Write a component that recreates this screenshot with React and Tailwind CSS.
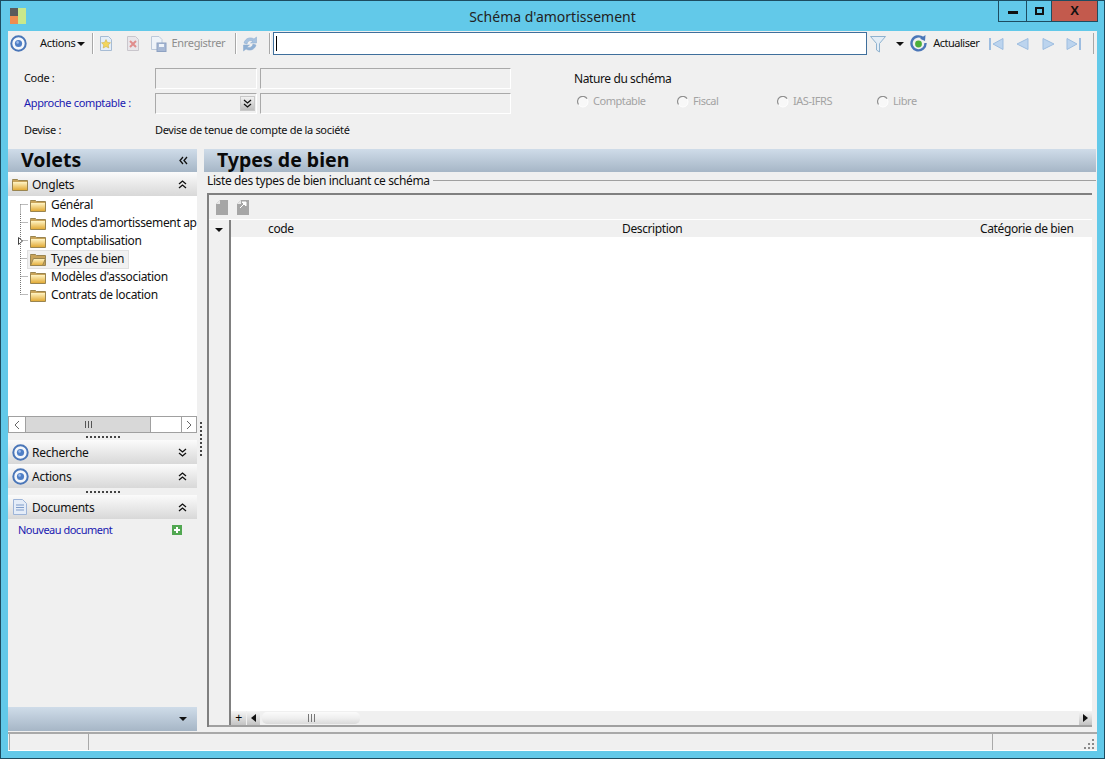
const Target = ({ className = "" }) => (
  <svg viewBox="0 0 17 17" className={`w-[17px] h-[17px] shrink-0 ${className}`}>
    <circle cx="8.5" cy="8.5" r="7.2" fill="#f4f7fb" stroke="#4a76b8" strokeWidth="2" />
    <circle cx="8.5" cy="8.5" r="3.6" fill="#4f7fc6" />
    <circle cx="7.6" cy="7.4" r="1.3" fill="#9dbcec" />
  </svg>
);

const Folder = ({ open = false, className = "" }) => (
  <svg viewBox="0 0 16 13" className={`w-[16px] h-[13px] shrink-0 ${className}`}>
    <defs>
      <linearGradient id="fld" x1="0" y1="0" x2="0" y2="1">
        <stop offset="0" stopColor="#fff4c4" />
        <stop offset="1" stopColor="#e2ab38" />
      </linearGradient>
    </defs>
    <path d="M0.5 2.5 L0.5 1.5 L5.5 1.5 L6.5 2.5 L15.5 2.5 L15.5 12.5 L0.5 12.5 Z" fill="#c9a45a" stroke="#9a8550" strokeWidth="1" />
    {open ? (
      <path d="M0.5 12.5 L3.5 5.5 L15.5 5.5 L12.5 12.5 Z" fill="url(#fld)" stroke="#9a8550" strokeWidth="1" />
    ) : (
      <rect x="1" y="4" width="14" height="8" fill="url(#fld)" />
    )}
  </svg>
);

const Chevs = ({ dir = "up", className = "" }) => (
  <svg viewBox="0 0 9 9" className={`w-[9px] h-[9px] shrink-0 ${className}`} fill="none" stroke="#111" strokeWidth="1.3">
    {dir === "up" && <path d="M1 4 L4.5 1 L8 4 M1 8 L4.5 5 L8 8" />}
    {dir === "down" && <path d="M1 1 L4.5 4 L8 1 M1 5 L4.5 8 L8 5" />}
    {dir === "left" && <path d="M4 1 L1 4.5 L4 8 M8 1 L5 4.5 L8 8" />}
  </svg>
);

const Caret = ({ className = "" }) => (
  <svg viewBox="0 0 8 4" className={`w-[8px] h-[4px] shrink-0 ${className}`}>
    <path d="M0 0 H8 L4 4 Z" fill="#111" />
  </svg>
);

const Sep = ({ className = "" }) => <div className={`w-[1px] h-[21px] bg-[#a8a8a8] border-r border-white box-content shrink-0 ${className}`} />;

const Nav = ({ d, bar, className = "" }) => (
  <svg viewBox="0 0 16 14" className={`w-[16px] h-[14px] shrink-0 ${className}`}>
    <path d={d} fill="#bcd4ee" stroke="#9dbde0" />
    {bar && <path d={bar} stroke="#9dbde0" strokeWidth="2" />}
  </svg>
);

const GridIcon = ({ arrow }) => (
  <svg viewBox="0 0 12 15" className="w-[12px] h-[15px] shrink-0">
    <path d="M0 4 L4 0 H12 V15 H0 Z" fill="#a6a6a6" />
    <path d="M0 4 L4 0 V4 Z" fill="#e8e8e8" />
    {arrow && <path d="M5 2 H9 V6 Z M3 8 L7 4" fill="#fff" stroke="#fff" />}
  </svg>
);

const Section = ({ icon, label, dir }) => (
  <div className="h-[24px] bg-gradient-to-b from-[#fbfbfb] to-[#d8d8d8] flex items-center pl-[4px] pr-[10px] text-[12px] tracking-[-0.25px] text-[#111]">
    <div className="w-[20px] flex items-center">{icon}</div>
    <span className="flex-1 pt-[1px]">{label}</span>
    <Chevs dir={dir} />
  </div>
);

const Grip = () => (
  <div className="h-[7px] flex items-center justify-center">
    <div className="w-[34px] h-[2px] bg-[repeating-linear-gradient(90deg,#444_0,#444_2px,transparent_2px,transparent_4px)]" />
  </div>
);

const Field = ({ className = "", children }) => (
  <div className={`h-[21px] bg-[#f0f0f0] border border-[#ffffff] border-t-[#a9a9a9] border-l-[#a9a9a9] flex items-center justify-end pr-[1px] ${className}`}>{children}</div>
);

const Radio = ({ label }) => (
  <div className="w-[100px] flex items-center text-[#a3a3a3] tracking-[-0.45px]">
    <svg viewBox="0 0 12 12" className="w-[12px] h-[12px] shrink-0 mr-[4px]">
      <circle cx="6" cy="6" r="5" fill="#f8f8f8" stroke="#ffffff" />
      <path d="M10 2.6 A5 5 0 0 0 1.5 8.5" fill="none" stroke="#8f8f8f" strokeWidth="1.2" />
    </svg>
    <span>{label}</span>
  </div>
);

const TreeRow = ({ label, last, first, expand, selected }) => (
  <div className="h-[18px] flex items-center whitespace-nowrap">
    <svg viewBox="0 0 19 18" className="w-[19px] h-[18px] shrink-0">
      <path d={`M11.5 ${first ? 8.5 : 0} V${last ? 8.5 : 18}`} stroke="#777" strokeDasharray="1 1" fill="none" />
      <path d="M11.5 8.5 H19" stroke="#777" strokeDasharray="1 1" fill="none" />
      {expand && <path d="M9.5 5.5 L13.5 9 L9.5 12.5 Z" fill="#fff" stroke="#444" />}
    </svg>
    <div className={`flex items-center h-[17px] pr-[4px] pl-[2px] ${selected ? "bg-[#f1f1f1] outline outline-1 outline-[#e0e0e0]" : ""}`}>
      <Folder open={selected} className="mr-[5px]" />
      <span>{label}</span>
    </div>
  </div>
);

export default function App() {
  return (
    <div className="w-[1105px] h-[759px] bg-[#62c9e9] border border-[#1d4c60] flex flex-col overflow-hidden text-[11px] tracking-[-0.33px] text-[#111] font-['Noto_Sans','Liberation_Sans',sans-serif]">
      {/* Title bar */}
      <div className="h-[30px] shrink-0 flex items-start">
        <div className="w-[16px] h-[16px] ml-[9px] mt-[7px] grid grid-cols-2 shrink-0">
          <div className="bg-[#5b5b5b]" />
          <div className="bg-[#c9e88b] row-span-2" />
          <div className="bg-[#ef8d4f]" />
        </div>
        <div className="flex-1 text-center text-[14px] tracking-normal pt-[5px] pl-[81px] text-[#222]">Schéma d'amortissement</div>
        <div className="flex h-[21px] mr-[6px] border border-t-0 border-[#1d4c60] shrink-0">
          <div className="w-[28px] flex items-center justify-center border-r border-[#1d4c60]">
            <div className="w-[10px] h-[3px] bg-[#111] mt-[3px]" />
          </div>
          <div className="w-[25px] flex items-center justify-center border-r border-[#1d4c60]">
            <div className="w-[9px] h-[8px] border-2 border-[#111]" />
          </div>
          <div className="w-[45px] bg-[#c35a4d] flex items-center justify-center text-[13px] font-bold text-[#111] font-['Liberation_Sans',sans-serif]">X</div>
        </div>
      </div>

      {/* Client */}
      <div className="flex-1 min-h-0 mx-[7px] bg-[#f0f0f0] flex flex-col">
        {/* Toolbar */}
        <div className="h-[25px] shrink-0 flex items-center pl-[2px]">
          <Target />
          <span className="ml-[13px]">Actions</span>
          <Caret className="ml-[1px]" />
          <Sep className="ml-[7px]" />
          <svg viewBox="0 0 14 15" className="w-[14px] h-[15px] ml-[5px] shrink-0">
            <path d="M1.5 0.5 H9.5 L12.5 3.5 V14.5 H1.5 Z" fill="#e5eef8" stroke="#a7bcd4" />
            <path d="M7 3.5 L8.4 6.4 L11.5 6.8 L9.2 8.9 L9.8 12 L7 10.5 L4.2 12 L4.8 8.9 L2.5 6.8 L5.6 6.4 Z" fill="#f4d65c" stroke="#c9a93a" strokeWidth="0.5" />
          </svg>
          <svg viewBox="0 0 14 15" className="w-[14px] h-[15px] ml-[13px] shrink-0">
            <path d="M1.5 0.5 H9.5 L12.5 3.5 V14.5 H1.5 Z" fill="#e9e6ea" stroke="#c9c6cc" />
            <path d="M4 5 L10 11 M10 5 L4 11" stroke="#e08d8d" strokeWidth="2" />
          </svg>
          <svg viewBox="0 0 16 16" className="w-[16px] h-[16px] ml-[11px] shrink-0">
            <path d="M0.5 0.5 H8 L11 3.5 V13.5 H0.5 Z" fill="#eef3f9" stroke="#bcc9da" />
            <rect x="6" y="7" width="9" height="8.5" fill="#a7b8d4" stroke="#8ea2c2" />
            <rect x="8" y="8" width="5" height="3" fill="#eef3f9" />
          </svg>
          <span className="ml-[5px] text-[#8d8d8d]">Enregistrer</span>
          <Sep className="ml-[10px]" />
          <svg viewBox="0 0 16 16" className="w-[16px] h-[16px] ml-[5px] shrink-0">
            <path d="M2 7 A6.5 6.5 0 0 1 12 3 L14.5 1 V7 H8.5 L11 5 A4 4 0 0 0 5 8 Z" fill="#a8c3e0" stroke="#8aa9cc" strokeWidth="0.5" />
            <path d="M14 9 A6.5 6.5 0 0 1 4 13 L1.5 15 V9 H7.5 L5 11 A4 4 0 0 0 11 8 Z" fill="#8fb0d4" stroke="#8aa9cc" strokeWidth="0.5" />
          </svg>
          <Sep className="ml-[11px]" />
          <div className="ml-[2px] w-[594px] h-[23px] bg-white border border-[#3f6f9c] flex items-center pl-[2px] shrink-0">
            <div className="w-[1px] h-[15px] bg-black" />
          </div>
          <svg viewBox="0 0 16 18" className="w-[16px] h-[18px] ml-[3px] shrink-0">
            <path d="M0.5 1.5 H15.5 L9.5 8.5 V17 L6.5 15 V8.5 Z" fill="#e3edf6" stroke="#8fb2cf" />
          </svg>
          <Caret className="ml-[10px]" />
          <svg viewBox="0 0 17 17" className="w-[17px] h-[17px] ml-[6px] shrink-0">
            <path d="M13 3 A7 7 0 1 0 15.5 8" fill="none" stroke="#4a76b8" strokeWidth="2.4" />
            <path d="M10 3.8 L15.5 0 L15 6 Z" fill="#4a76b8" />
            <circle cx="8.5" cy="9" r="3.4" fill="#4caf3a" />
          </svg>
          <span className="ml-[6px] tracking-[-0.5px]">Actualiser</span>
          <Nav className="ml-[9px]" d="M15 1.5 V12.5 L5 7 Z" bar="M2 1 V13" />
          <Nav className="ml-[10px]" d="M14 1.5 V12.5 L3 7 Z" />
          <Nav className="ml-[11px]" d="M2 1.5 V12.5 L13 7 Z" />
          <Nav className="ml-[9px]" d="M1 1.5 V12.5 L11 7 Z" bar="M14 1 V13" />
          <div className="w-[1px] h-[21px] bg-[#a8a8a8] ml-[11px] shrink-0" />
        </div>

        {/* Form */}
        <div className="h-[92px] shrink-0 flex pl-[16px] pt-[12px]">
          <div className="w-[487px] shrink-0 flex flex-col">
            <div className="flex items-center">
              <span className="w-[131px]">Code :</span>
              <Field className="w-[102px]" />
              <Field className="w-[251px] ml-[3px]" />
            </div>
            <div className="flex items-center mt-[4px]">
              <span className="w-[131px] text-[#1a1ab0]">Approche comptable :</span>
              <Field className="w-[102px]">
                <div className="w-[15px] h-[15px] bg-gradient-to-b from-[#f2f2f2] to-[#bdbdbd] border border-[#c8c8c8] flex items-center justify-center">
                  <Chevs dir="down" />
                </div>
              </Field>
              <Field className="w-[251px] ml-[3px]" />
            </div>
            <div className="flex items-center mt-[6px] h-[21px]">
              <span className="w-[131px]">Devise :</span>
              <span>Devise de tenue de compte de la société</span>
            </div>
          </div>
          <div className="ml-[63px] flex flex-col">
            <div className="h-[21px] flex items-center text-[12px] tracking-[-0.4px]">Nature du schéma</div>
            <div className="flex items-center mt-[2px] h-[21px] pl-[3px]">
              <Radio label="Comptable" />
              <Radio label="Fiscal" />
              <Radio label="IAS-IFRS" />
              <Radio label="Libre" />
            </div>
          </div>
        </div>

        {/* Panels */}
        <div className="flex-1 min-h-0 flex pt-[1px]">
          {/* Left */}
          <div className="w-[189px] shrink-0 flex flex-col">
            <div className="h-[23px] shrink-0 bg-gradient-to-b from-[#cfdce9] to-[#a6b6c6] flex items-center pl-[13px] pr-[9px] tracking-normal">
              <span className="flex-1 text-[19.5px] font-bold text-[#0a0a0a] pb-[2px]">Volets</span>
              <Chevs dir="left" />
            </div>
            <Section icon={<Folder />} label="Onglets" dir="up" />
            <div className="h-[220px] shrink-0 bg-white overflow-hidden text-[12px] tracking-[-0.33px] pl-[1px]">
              <div className="w-[189px]">
                <TreeRow label="Général" first />
                <TreeRow label="Modes d'amortissement applicables" />
                <TreeRow label="Comptabilisation" expand />
                <TreeRow label="Types de bien" selected />
                <TreeRow label="Modèles d'association" />
                <TreeRow label="Contrats de location" last />
              </div>
            </div>
            <div className="h-[17px] shrink-0 bg-white border border-[#a0a0a0] flex items-stretch text-[#555]">
              <div className="w-[17px] border-r border-[#a0a0a0] flex items-center justify-center">
                <svg viewBox="0 0 6 10" className="w-[6px] h-[10px]"><path d="M5 1 L1 5 L5 9" fill="none" stroke="#666" /></svg>
              </div>
              <div className="w-[125px] bg-[#d8d8d8] border-r border-[#a0a0a0] flex items-center justify-center">
                <div className="w-[7px] h-[7px] bg-[repeating-linear-gradient(90deg,#555_0,#555_1px,transparent_1px,transparent_3px)]" />
              </div>
              <div className="flex-1" />
              <div className="w-[15px] border-l border-[#a0a0a0] flex items-center justify-center">
                <svg viewBox="0 0 6 10" className="w-[6px] h-[10px]"><path d="M1 1 L5 5 L1 9" fill="none" stroke="#666" /></svg>
              </div>
            </div>
            <Grip />
            <Section icon={<Target className="w-[16px] h-[16px]" />} label="Recherche" dir="down" />
            <Section icon={<Target className="w-[16px] h-[16px]" />} label="Actions" dir="up" />
            <Grip />
            <Section
              icon={
                <svg viewBox="0 0 14 16" className="w-[14px] h-[16px] ml-[1px]">
                  <path d="M0.5 0.5 H9.5 L13.5 4.5 V15.5 H0.5 Z" fill="#e4ecf8" stroke="#9db4d8" />
                  <path d="M3 6 H11 M3 8.5 H11 M3 11 H11" stroke="#7f9cc9" />
                </svg>
              }
              label="Documents"
              dir="up"
            />
            <div className="h-[22px] shrink-0 flex items-center pl-[10px] pr-[15px] text-[#1a1ab0] tracking-[-0.5px]">
              <span className="flex-1">Nouveau document</span>
              <svg viewBox="0 0 10 10" className="w-[10px] h-[10px]">
                <rect width="10" height="10" fill="#52a852" />
                <path d="M5 2 V8 M2 5 H8" stroke="#fff" strokeWidth="2" />
              </svg>
            </div>
            <div className="flex-1" />
            <div className="h-[24px] shrink-0 bg-gradient-to-b from-[#cfdce9] to-[#a6b6c6] flex items-center justify-end pr-[10px]">
              <Caret />
            </div>
          </div>

          {/* Splitter */}
          <div className="w-[7px] shrink-0 flex items-start justify-center pl-[1px] pt-[273px]">
            <div className="w-[2px] h-[36px] bg-[repeating-linear-gradient(180deg,#444_0,#444_2px,transparent_2px,transparent_4px)]" />
          </div>

          {/* Right */}
          <div className="flex-1 min-w-0 flex flex-col pr-[1px]">
            <div className="h-[23px] shrink-0 bg-gradient-to-b from-[#cfdce9] to-[#a6b6c6] flex items-center pl-[13px] pb-[2px] text-[19.5px] tracking-normal font-bold text-[#0a0a0a]">Types de bien</div>
            <div className="h-[17px] shrink-0 flex items-center pl-[3px] text-[12px] tracking-[-0.38px]">
              <span className="whitespace-nowrap">Liste des types de bien incluant ce schéma</span>
              <div className="flex-1 h-[1px] bg-[#a0a0a0] ml-[3px]" />
            </div>
            <div className="h-[534px] mt-[4px] ml-[3px] mr-[4px] border-2 border-r-0 border-b-0 border-[#808080] bg-white flex flex-col shrink-0">
              <div className="h-[25px] shrink-0 bg-[#f0f0f0] flex items-center pl-[7px] gap-[9px] border-b border-white">
                <GridIcon />
                <GridIcon arrow />
              </div>
              <div className="flex-1 min-h-0 flex">
                <div className="w-[22px] shrink-0 bg-[#f0f0f0] border-r-2 border-[#808080] flex justify-center pt-[8px]">
                  <Caret />
                </div>
                <div className="flex-1 min-w-0 flex flex-col">
                  <div className="h-[17px] shrink-0 bg-[#f0f0f0] text-[12px] tracking-[-0.38px] flex items-center">
                    <span className="ml-[37px] w-[354px]">code</span>
                    <span className="w-[358px]">Description</span>
                    <span>Catégorie de bien</span>
                  </div>
                  <div className="flex-1" />
                  <div className="h-[14px] shrink-0 bg-[#f0f0f0] flex items-stretch">
                    <div className="w-[15px] bg-gradient-to-b from-[#f6f6f6] to-[#c4c4c4] flex items-center justify-center font-['Liberation_Sans',sans-serif] text-[12px] text-black">+</div>
                    <div className="w-[13px] ml-[1px] bg-gradient-to-b from-[#f6f6f6] to-[#c4c4c4] flex items-center justify-center">
                      <svg viewBox="0 0 5 8" className="w-[5px] h-[8px]"><path d="M5 0 V8 L0 4 Z" fill="#111" /></svg>
                    </div>
                    <div className="w-[98px] ml-[2px] my-[1px] rounded-[5px] bg-gradient-to-b from-[#fbfbfb] via-[#efefef] to-[#dadada] flex items-center justify-center">
                      <div className="w-[7px] h-[8px] bg-[repeating-linear-gradient(90deg,#777_0,#777_1px,transparent_1px,transparent_3px)]" />
                    </div>
                    <div className="flex-1" />
                    <div className="w-[13px] bg-gradient-to-b from-[#f6f6f6] to-[#c4c4c4] flex items-center justify-center">
                      <svg viewBox="0 0 5 8" className="w-[5px] h-[8px]"><path d="M0 0 V8 L5 4 Z" fill="#111" /></svg>
                    </div>
                  </div>
                </div>
              </div>
              <div className="h-[2px] shrink-0 bg-[#a0a0a0]" />
            </div>
          </div>
        </div>

        {/* Status bar */}
        <div className="h-[19px] shrink-0 mt-[1px] bg-[#f0f0f0] border-t-2 border-[#a9a9a9] border-b border-b-white flex">
          <div className="w-[80px] ml-[1px] border-l border-r border-[#a9a9a9]" />
          <div className="flex-1 border-r border-[#a9a9a9]" />
          <div className="w-[104px] flex items-end justify-end pr-[3px] pb-[1px]">
            <svg viewBox="0 0 10 10" className="w-[10px] h-[10px]" fill="#8a8a8a">
              <rect x="8" y="0" width="2" height="2" />
              <rect x="4" y="4" width="2" height="2" />
              <rect x="8" y="4" width="2" height="2" />
              <rect x="0" y="8" width="2" height="2" />
              <rect x="4" y="8" width="2" height="2" />
              <rect x="8" y="8" width="2" height="2" />
            </svg>
          </div>
        </div>
      </div>
      <div className="h-[7px] shrink-0" />
    </div>
  );
}
